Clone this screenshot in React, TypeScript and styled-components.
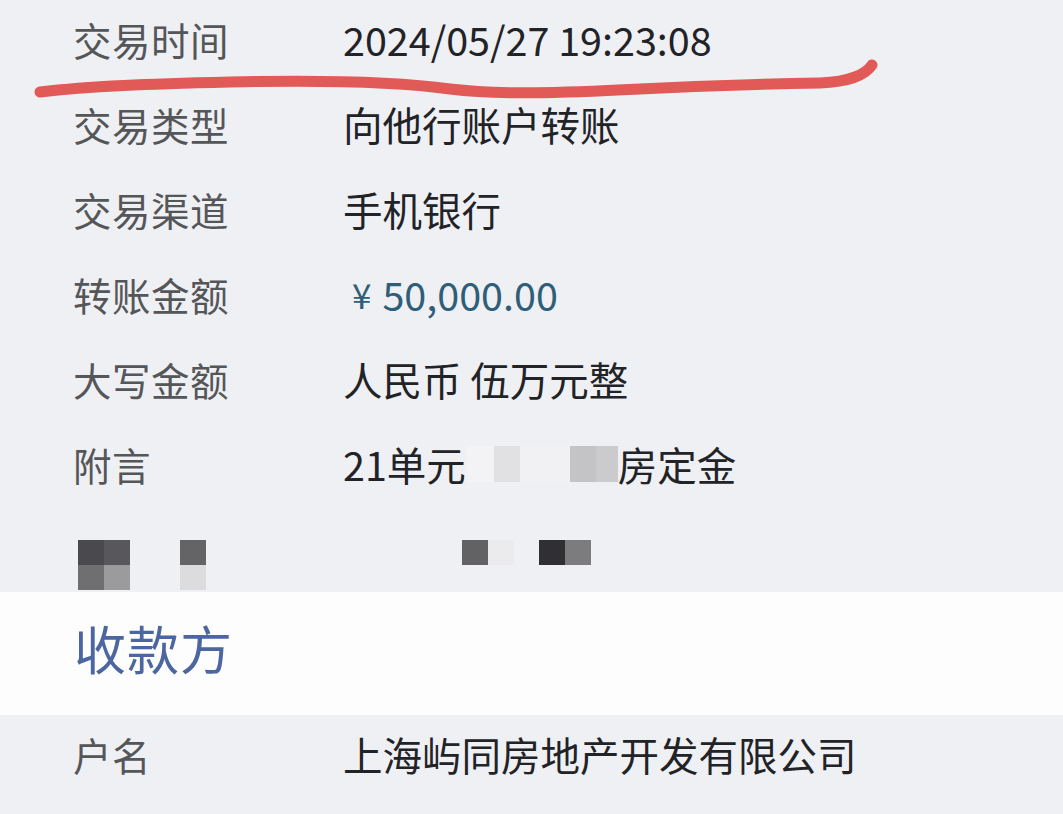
import * as React from "react";
import styled, { createGlobalStyle } from "styled-components";

const GlobalStyle = createGlobalStyle`
    html, body {
        margin: 0;
        padding: 0;
        background: #eff0f4;
    }
    body {
        font-family: "Noto Sans CJK SC", "Noto Sans", sans-serif;
    }
`;

const Page = styled.div`
    position: relative;
    width: 1063px;
    height: 814px;
    overflow: hidden;
    background: #eff0f4;
`;

const Row = styled.div`
    box-sizing: border-box;
    display: flex;
    align-items: center;
    height: 85px;
    padding: 0 0 8px 73px;
`;

const Label = styled.div`
    width: 270px;
    flex: none;
    font-size: 38.5px;
    color: #555658;
    letter-spacing: 0.5px;
`;

const Value = styled.div<{ accent?: boolean }>`
    display: flex;
    align-items: center;
    font-size: 39.5px;
    color: ${props => props.accent ? "#2f5e78" : "#222326"};
    white-space: nowrap;
`;

const Yen = styled.span`
    font-size: 35px;
    margin: 0 11px 0 9px;
`;

const Pixel = styled.span<{ shade: string; w?: number; h?: number }>`
    display: inline-block;
    width: ${props => props.w || 26}px;
    height: ${props => props.h || 36}px;
    background: ${props => props.shade};
`;

const MosaicRow = styled.div`
    position: relative;
    height: 82px;
`;

const Block = styled.span<{ shade: string }>`
    position: absolute;
    width: 26px;
    height: 25px;
    background: ${props => props.shade};
`;

const Section = styled.div`
    box-sizing: border-box;
    display: flex;
    align-items: center;
    height: 123px;
    padding: 0 0 12px 74px;
    background: #fdfdfe;
`;

const SectionTitle = styled.div`
    font-size: 52px;
    color: #4c66a0;
    letter-spacing: 1px;
`;

const Stroke = styled.svg`
    position: absolute;
    left: 0;
    top: 0;
    pointer-events: none;
`;

const mosaic: Array<[number, number, string]> = [
    [78, 30, "#4a4a4e"], [104, 30, "#58585c"],
    [78, 55, "#6f6f72"], [104, 55, "#9b9b9d"],
    [180, 30, "#646467"], [180, 55, "#dcdcde"],
    [462, 30, "#626265"], [488, 30, "#ebebed"],
    [539, 30, "#303034"], [565, 30, "#7c7c7f"],
];

const rows: Array<{ label: string; value: React.ReactNode; accent?: boolean }> = [
    { label: "交易时间", value: "2024/05/27 19:23:08" },
    { label: "交易类型", value: "向他行账户转账" },
    { label: "交易渠道", value: "手机银行" },
    { label: "转账金额", value: <><Yen>¥</Yen>50,000.00</>, accent: true },
    { label: "大写金额", value: "人民币 伍万元整" },
    {
        label: "附言",
        value: <>
            21单元
            <Pixel shade="#f3f3f5" w={28} />
            <Pixel shade="#e1e1e3" />
            <Pixel shade="#f1f1f3" w={50} />
            <Pixel shade="#c4c4c7" w={26} />
            <Pixel shade="#cbcbce" w={22} />
            房定金
        </>,
    },
];

export default function App(): JSX.Element {
    return (
        <Page>
            <GlobalStyle />
            {rows.map(row => (
                <Row key={row.label}>
                    <Label>{row.label}</Label>
                    <Value accent={row.accent}>{row.value}</Value>
                </Row>
            ))}
            <MosaicRow>
                {mosaic.map(([x, y, c], i) => (
                    <Block key={i} shade={c} style={{ left: x, top: y }} />
                ))}
            </MosaicRow>
            <Section>
                <SectionTitle>收款方</SectionTitle>
            </Section>
            <Row>
                <Label>户名</Label>
                <Value>上海屿同房地产开发有限公司</Value>
            </Row>
            <Stroke width="1063" height="120" viewBox="0 0 1063 120">
                <path
                    d="M40 92 C 90 86, 150 84, 230 82 C 320 80, 400 82, 450 89 C 500 95, 560 93, 640 89 C 700 86, 760 84, 820 83 C 850 82, 866 74, 872 65"
                    fill="none"
                    stroke="#e15a57"
                    strokeWidth="11"
                    strokeLinecap="round"
                />
            </Stroke>
        </Page>
    );
}
